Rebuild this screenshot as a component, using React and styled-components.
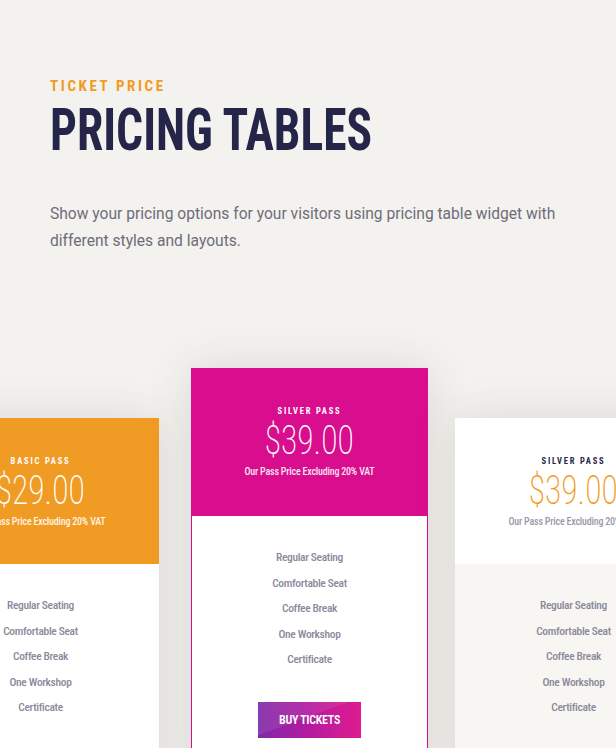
import React from 'react'
import styled, { createGlobalStyle } from 'styled-components'

const GlobalStyle = createGlobalStyle`
  html, body {
    margin: 0;
    padding: 0;
    background: #f3f2ef;
  }
  body {
    font-family: 'Roboto', 'Liberation Sans', sans-serif;
    overflow: hidden;
  }
`

const condensed = `'Roboto Condensed', 'Liberation Sans Narrow', 'DejaVu Sans Condensed', sans-serif`

const Page = styled.div`
  width: 616px;
  height: 748px;
  overflow: hidden;
  background: #f3f2ef;
`

const Intro = styled.div`
  padding: 77px 50px 0 50px;
`

const Eyebrow = styled.div`
  font-family: ${condensed};
  font-size: 15px;
  font-weight: 700;
  letter-spacing: 2.6px;
  color: #f09b24;
  line-height: 18px;
`

const Title = styled.h1`
  margin: 5px 0 0 0;
  font-family: ${condensed};
  font-size: 59px;
  font-weight: 700;
  line-height: 60px;
  color: #25254a;
  white-space: nowrap;
  transform: scaleX(0.805);
  transform-origin: left center;
`

const Lead = styled.p`
  margin: 41px 0 0 0;
  font-family: 'Roboto', sans-serif;
  font-size: 15.6px;
  line-height: 27px;
  color: #6e6d7a;
  max-width: 520px;
`

const Row = styled.div`
  display: flex;
  align-items: flex-start;
  margin-top: 113px;
  margin-left: -78px;
`

const Card = styled.div`
  flex: 0 0 237px;
  width: 237px;
  box-sizing: border-box;
  margin-top: ${(p) => (p.$featured ? '0' : '50px')};
  margin-right: ${(p) => p.$gap || 0}px;
  box-shadow: 0 0 40px rgba(60, 55, 40, 0.13);
  background: ${(p) => p.$bodyBg};
  border: ${(p) => (p.$featured ? '1px solid #d90e8f' : 'none')};
  border-top: none;
`

const Head = styled.div`
  background: ${(p) => p.$bg};
  height: ${(p) => (p.$featured ? 148 : 146)}px;
  margin: ${(p) => (p.$featured ? '0 -1px' : '0')};
  display: flex;
  flex-direction: column;
  align-items: center;
  padding-top: 38px;
  box-sizing: border-box;
`

const PassName = styled.div`
  font-family: ${condensed};
  font-size: 8.5px;
  font-weight: 700;
  letter-spacing: 1.8px;
  color: ${(p) => p.$color};
  line-height: 10px;
`

const Price = styled.div`
  font-family: ${condensed};
  font-size: 41px;
  font-weight: 200;
  line-height: 44px;
  margin-top: 2px;
  color: ${(p) => p.$color};
  transform: scaleX(0.82);
`

const Note = styled.div`
  font-family: ${condensed};
  font-size: 10px;
  font-weight: 500;
  letter-spacing: -0.2px;
  margin-top: 4px;
  color: ${(p) => p.$color};
`

const Features = styled.ul`
  list-style: none;
  margin: 0;
  padding: 34px 0 0 0;
  display: flex;
  flex-direction: column;
  align-items: center;
  gap: 11px;
`

const Feature = styled.li`
  font-family: ${condensed};
  font-size: 11.5px;
  font-weight: 500;
  letter-spacing: -0.35px;
  line-height: 14.5px;
  color: #8b899a;
`

const ButtonWrap = styled.div`
  display: flex;
  justify-content: center;
  padding: 35px 0 40px 0;
`

const BuyButton = styled.button`
  width: 103px;
  height: 36px;
  border: none;
  cursor: pointer;
  font-family: ${condensed};
  font-size: 12px;
  font-weight: 600;
  letter-spacing: -0.3px;
  color: #fff;
  background:
    linear-gradient(160deg, rgba(255, 255, 255, 0.08) 0 45%, rgba(255, 255, 255, 0) 45%),
    linear-gradient(90deg, #7f2aa8 0%, #b51aa0 50%, #df1c8f 100%);
`

const features = [
  'Regular Seating',
  'Comfortable Seat',
  'Coffee Break',
  'One Workshop',
  'Certificate',
]

const plans = [
  {
    name: 'BASIC PASS',
    price: '$29.00',
    headBg: '#f09b24',
    bodyBg: '#ffffff',
    nameColor: '#ffffff',
    priceColor: '#ffffff',
    noteColor: '#fff5e6',
    gap: 32,
  },
  {
    name: 'SILVER PASS',
    price: '$39.00',
    headBg: '#d90e8f',
    bodyBg: '#ffffff',
    nameColor: '#ffffff',
    priceColor: '#ffffff',
    noteColor: '#fbe3f1',
    featured: true,
    gap: 27,
  },
  {
    name: 'SILVER PASS',
    price: '$39.00',
    headBg: '#ffffff',
    bodyBg: '#f7f6f3',
    nameColor: '#25254a',
    priceColor: '#f09b24',
    noteColor: '#9a98a6',
    gap: 0,
  },
]

export default function App() {
  return (
    <Page>
      <GlobalStyle />
      <Intro>
        <Eyebrow>TICKET PRICE</Eyebrow>
        <Title>PRICING TABLES</Title>
        <Lead>
          Show your pricing options for your visitors using pricing table
          widget with different styles and layouts.
        </Lead>
      </Intro>
      <Row>
        {plans.map((plan, i) => (
          <Card
            key={i}
            $featured={plan.featured}
            $bodyBg={plan.bodyBg}
            $gap={plan.gap}
          >
            <Head $bg={plan.headBg} $featured={plan.featured}>
              <PassName $color={plan.nameColor}>{plan.name}</PassName>
              <Price $color={plan.priceColor}>{plan.price}</Price>
              <Note $color={plan.noteColor}>
                Our Pass Price Excluding 20% VAT
              </Note>
            </Head>
            <Features>
              {features.map((f) => (
                <Feature key={f}>{f}</Feature>
              ))}
            </Features>
            <ButtonWrap>
              <BuyButton>BUY TICKETS</BuyButton>
            </ButtonWrap>
          </Card>
        ))}
      </Row>
    </Page>
  )
}
